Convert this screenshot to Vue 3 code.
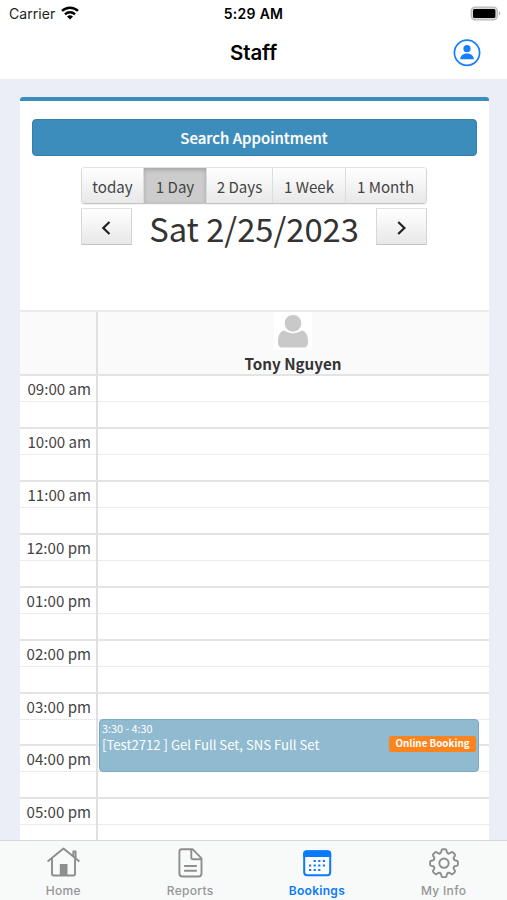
<script setup>
const views = [
  { label: 'today', cls: 'v-today' },
  { label: '1 Day', cls: 'v-day', active: true },
  { label: '2 Days', cls: 'v-days' },
  { label: '1 Week', cls: 'v-week' },
  { label: '1 Month', cls: 'v-month' },
]
const hours = ['09:00 am', '10:00 am', '11:00 am', '12:00 pm', '01:00 pm', '02:00 pm', '03:00 pm', '04:00 pm', '05:00 pm']
</script>

<template>
  <div class="phone">
    <header class="top">
      <div class="status">
        <div class="carrier">
          <span>Carrier</span>
          <svg width="18" height="14" viewBox="0 0 18 14" fill="none" stroke="#000" stroke-width="2.5">
            <path d="M1 4.9a11.6 11.6 0 0 1 16 0" />
            <path d="M4 8.3a7.2 7.2 0 0 1 10 0" />
            <path d="M9 13.6 6 10.6a4.3 4.3 0 0 1 6 0Z" fill="#000" stroke="none" />
          </svg>
        </div>
        <div class="clock">5:29 AM</div>
        <div class="battery">
          <svg width="31" height="15" viewBox="0 0 31 15">
            <rect x="1.3" y="1.1" width="26" height="12.8" rx="3.8" fill="#dcdcdc" stroke="#b9b9b9" stroke-width="1.3" />
            <rect x="3" y="3.100" width="22.400" height="8.900" rx="1.5" fill="#000" />
            <path d="M28.8 5.3c2 .7 2 3.700 0 4.400z" fill="#b5b5b5" />
          </svg>
        </div>
      </div>
      <div class="titlebar">
        <h1>Staff</h1>
        <svg class="profile" width="28" height="28" viewBox="0 0 28 28">
          <circle cx="14" cy="13.700" r="12.600" fill="none" stroke="#167efb" stroke-width="1.700" />
          <circle cx="14" cy="9.700" r="3.600" fill="#167efb" />
          <path d="M7.200 20.200c0-3.600 2.700-5.800 6.800-5.800s6.800 2.200 6.800 5.800z" fill="#167efb" />
        </svg>
      </div>
    </header>

    <main class="content">
      <section class="card">
        <button class="search">Search Appointment</button>
        <div class="views">
          <button v-for="v in views" :key="v.label" :class="[v.cls, { active: v.active }]">{{ v.label }}</button>
        </div>
        <div class="datebar">
          <button class="nav">
            <svg width="14" height="18" viewBox="0 0 14 18"><path d="M9.500 4 3.300 10l6.200 6" /></svg>
          </button>
          <h2>Sat 2/25/2023</h2>
          <button class="nav">
            <svg width="14" height="18" viewBox="0 0 14 18"><path d="M4.200 4 10.400 10l-6.200 6" /></svg>
          </button>
        </div>
        <div class="calendar">
          <div class="cal-head">
            <div class="axis"></div>
            <div class="resource">
              <svg width="38" height="38" viewBox="0 0 38 38">
                <rect width="38" height="38" fill="#fff" />
                <path d="M10.500 18.600C5.500 19.400 4 24 4 30c0 3.600 1.300 5.600 4.500 5.600h21c3.200 0 4.500-2 4.500-5.600 0-6-1.500-10.600-6.500-11.400-4.800 3.700-12.200 3.700-17 0Z" fill="#c9c9c9" />
                <circle cx="19" cy="11.300" r="9" fill="#c9c9c9" stroke="#fff" stroke-width="1.200" />
              </svg>
              <span>Tony Nguyen</span>
            </div>
          </div>
          <div v-for="h in hours" :key="h" class="hour">
            <div class="axis">{{ h }}</div>
            <div class="slot"></div>
          </div>
          <article class="event">
            <div class="time">3:30 - 4:30</div>
            <div class="desc">[Test2712 ] Gel Full Set, SNS Full Set</div>
            <span class="badge">Online Booking</span>
          </article>
        </div>
      </section>
    </main>

    <nav class="tabs">
      <a class="tab">
        <svg width="34" height="32" viewBox="0 0 34 32" fill="none" stroke="#8e8e8e" stroke-width="1.900" stroke-linejoin="round" stroke-linecap="round">
          <path d="M2.200 15 17.500 2.500l15.300 12.500M6 12.300v15.500q0 1.700 1.700 1.700h19.600q1.700 0 1.700-1.700V12.300M27.300 10V5.500h2.300V12" />
          <path d="M13.800 29.500V18h7.700v11.500z" fill="#8e8e8e" stroke="none" />
        </svg>
        <span>Home</span>
      </a>
      <a class="tab">
        <svg width="34" height="32" viewBox="0 0 34 32" fill="none" stroke="#8e8e8e" stroke-width="1.900" stroke-linejoin="round" stroke-linecap="round">
          <path d="M8.800 3.300h11L28.500 12.300v15.200a3 3 0 0 1-3 3H9.400a3 3 0 0 1-3-3v-21.800a2.400 2.400 0 0 1 2.400-2.400ZM18.300 3.500v8q0 1.800 1.800 1.800h8.200M11.800 20h11.300M11.800 24.700h11.300" />
        </svg>
        <span>Reports</span>
      </a>
      <a class="tab current">
        <svg width="34" height="32" viewBox="0 0 34 32">
          <rect x="4.200" y="5.300" width="26" height="23.900" rx="3" fill="#fff" stroke="#0a7aff" stroke-width="2" />
          <path d="M3.200 11V7.500q0-3 3-3h22q3 0 3 3V11z" fill="#0a7aff" />
          <path d="M13.600 15h13M9 19.500h17.600M9 24h13" stroke="#0a7aff" stroke-width="2" stroke-dasharray="2.200 2.400" />
        </svg>
        <span>Bookings</span>
      </a>
      <a class="tab">
        <svg width="34" height="32" viewBox="-17 -17.2 34 32" fill="none" stroke="#8e8e8e" stroke-width="1.900" stroke-linejoin="round" stroke-linecap="round">
          <path
            v-for="n in 8"
            :key="n"
            :transform="`rotate(${n * 45})`"
            d="M-4.060-9.790Q-2.900-10.300-2.700-11.600L-2.500-12.900Q-2.300-13.900-1.300-13.900H1.300Q2.300-13.900 2.500-12.900L2.700-11.600Q2.900-10.300 4.060-9.790"
          />
          <circle r="4.700" />
        </svg>
        <span>My Info</span>
      </a>
    </nav>
  </div>
</template>

<style>
body { margin: 0; overflow: hidden; }
</style>

<style scoped>
* { box-sizing: border-box; }
.phone {
  width: 507px; height: 900px; overflow: hidden;
  display: flex; flex-direction: column;
  background: #ebeef6; color: #333;
  font-family: "Noto Sans CJK SC", sans-serif;
}
button { font-family: inherit; margin: 0; padding: 0; color: inherit; }
h1, h2 { margin: 0; }
.top { height: 79px; flex: none; background: #fff; color: #000; font-family: Inter, sans-serif; }
.status { height: 27px; display: grid; grid-template-columns: 1fr 80px 1fr; align-items: center; }
.carrier { display: flex; align-items: center; gap: 6px; padding-left: 9px; font-size: 14px; letter-spacing: .05px; color: #222; }
.carrier svg { margin-top: -2px; }
.clock { text-align: center; font-size: 14px; font-weight: 600; letter-spacing: .3px; white-space: nowrap; }
.battery { display: flex; justify-content: flex-end; padding-right: 6px; }
.titlebar { height: 52px; display: grid; grid-template-columns: 1fr auto 1fr; align-items: center; }
.titlebar h1 { grid-column: 2; font-size: 20.500px; line-height: 24px; font-weight: 600; letter-spacing: -.1px; }
.profile { justify-self: end; margin-right: 26px; }
.content { flex: 1; min-height: 0; overflow: hidden; padding: 18px 18.500px 0 19.500px; }
.card { border-top: 4px solid #3c8dbc; border-radius: 3px; background: #fff; padding-top: 18px; display: flex; flex-direction: column; align-items: center; }
.search {
  width: 445px; height: 37px; border: 1px solid #367fa9; border-radius: 4px;
  background: #3c8dbc; color: #fff; font-size: 15px; font-weight: 500; line-height: 36px;
  text-shadow: 0 0 1px rgba(255, 255, 255, .4);
}
.views { display: flex; margin-top: 11px; width: 346px; height: 37px; border: 1px solid #ccc; border-color: #e2e2e2 #d4d4d4 #c4c4c4 #d8d8d8; border-radius: 4px; overflow: hidden; box-shadow: 0 1px 1px rgba(0, 0, 0, .06); }
.views button { border: 0; border-right: 1px solid #dcdcdc; background: linear-gradient(#fff, #e8e8e8); font-size: 15.100px; line-height: 34px; white-space: nowrap; color: #444; }
.views button:last-child { border-right: 0; padding-right: 1px; }
.views .active { background: #ccc; box-shadow: inset 0 2px 4px rgba(0, 0, 0, .2); }
.v-today { width: 62px; }
.v-day { width: 63px; }
.v-days { width: 66px; }
.v-week { width: 73px; }
.v-month { flex: 1; }
.datebar { width: 346px; height: 37px; margin-top: 4px; display: flex; justify-content: space-between; align-items: center; }
.nav { width: 51px; height: 37px; border: 1px solid #ccc; border-color: #e2e2e2 #d4d4d4 #c4c4c4 #d8d8d8; background: linear-gradient(#fff, #e8e8e8); display: flex; align-items: center; justify-content: center; }
.nav path { fill: none; stroke: #222; stroke-width: 2.200; }
.datebar h2 { font-size: 32.700px; line-height: 37px; font-weight: 400; white-space: nowrap; padding-top: 2px; }
.calendar { position: relative; width: 100%; margin-top: 65px; border-top: 2px solid #ebebeb; }
.cal-head { height: 62px; display: flex; background: #fafafa; }
.axis { width: 78px; flex: none; border-right: 2px solid #e0e0e0; }
.resource { flex: 1; display: flex; flex-direction: column; align-items: center; }
.resource svg { flex: none; }
.resource span { font-size: 15.200px; line-height: 26px; font-weight: 700; }
.hour {
  height: 52.930px; display: flex; border-top: 2px solid #e3e3e3;
  background: repeating-linear-gradient(90deg, #e3e3e3 0 1px, #f3f3f3 1px 2px) 0 25px / 100% 1px no-repeat;
}
.hour .axis { font-size: 15.100px; line-height: 24.400px; text-align: right; padding-right: 4.500px; color: #444; white-space: nowrap; }
.slot { flex: 1; }
.event {
  position: absolute; left: 79.500px; top: 407px; width: 380px; height: 53px;
  border: 1px solid #78abc3; border-radius: 4px; background: #8fbad0; color: #fff; padding: 0 1px;
}
.time { font-size: 10.800px; line-height: 17px; padding-left: 1px; }
.desc { font-size: 13.150px; line-height: 16px; white-space: nowrap; padding-left: 1px; }
.badge { position: absolute; right: 2px; top: 16px; width: 87px; height: 16px; border-radius: 2.500px; background: #fb841e; text-align: center; font-size: 9.800px; line-height: 15px; font-weight: 700; white-space: nowrap; }
.tabs { position: relative; flex: none; height: 60px; border-top: 1px solid #d5d7d8; background: #f8f9f9; display: grid; grid-template-columns: repeat(4, 1fr); font-family: Inter, sans-serif; }
.tab { display: flex; flex-direction: column; align-items: center; padding-top: 5px; color: #959595; }
.tab span { margin-top: 5px; font-size: 12px; line-height: 16px; font-weight: 500; letter-spacing: .3px; }
.current { color: #0a7aff; }
.current span { font-weight: 600; }
</style>
